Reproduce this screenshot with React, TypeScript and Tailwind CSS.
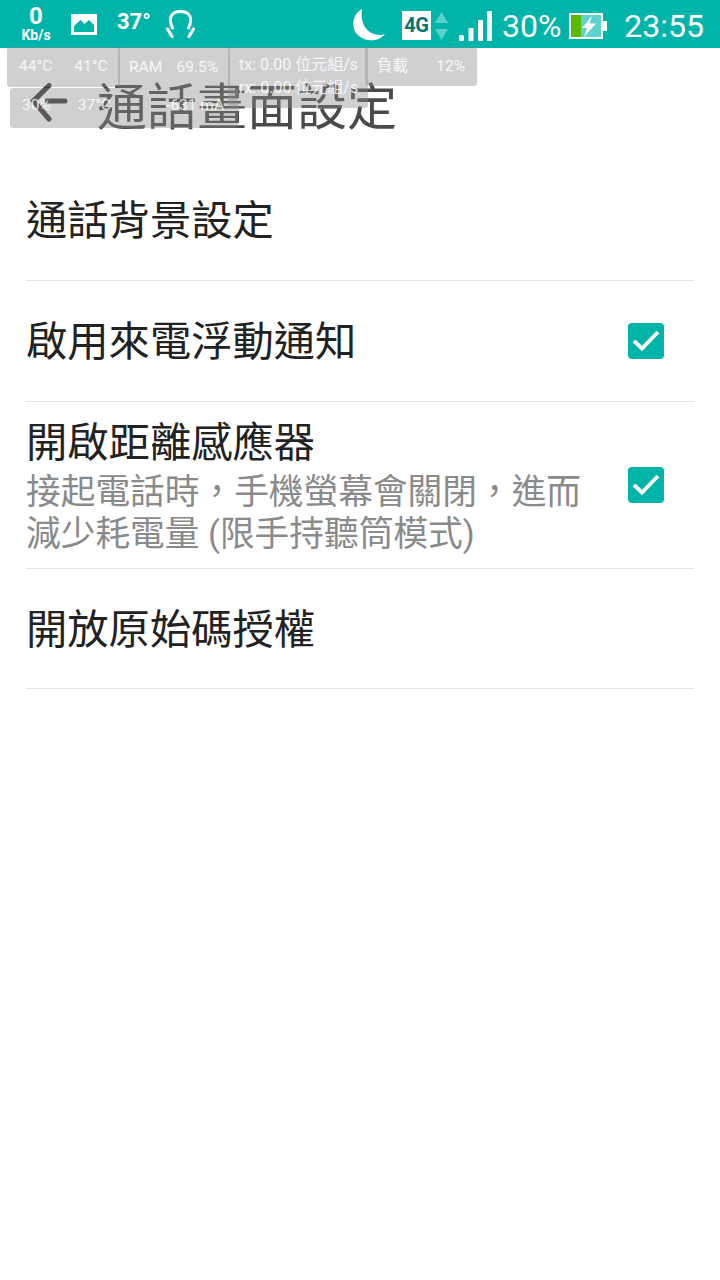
const cjk = "font-['Roboto','Noto_Sans_CJK_TC',sans-serif]";

function Check() {
  return (
    <div className="w-9 h-9 rounded-[4px] bg-[#00b4aa] flex items-center justify-center shrink-0">
      <svg width="36" height="36" viewBox="0 0 36 36" fill="none">
        <path d="M6 18 L14 25.500 L30 9" stroke="#fff" strokeWidth="3.800" />
      </svg>
    </div>
  );
}

function StatusBar() {
  return (
    <div className="h-12 bg-[#00b4aa] flex items-center text-white shrink-0 relative pt-[3px]">
      <div className="w-[71px] flex flex-col items-center pl-[1px] -mt-[3px] font-['Roboto',sans-serif] font-bold">
        <span className="text-[24px] leading-[20px]">0</span>
        <span className="text-[14px] leading-[14px] mt-[2px]">Kb/s</span>
      </div>
      <svg width="26" height="21" viewBox="0 0 26 21" className="-mt-[3px]">
        <path fillRule="evenodd" d="M0 0h26v21H0z M3 12 L9.500 6 L13.500 10 L18 6 L23 11 V18 H3Z" fill="#fff" />
      </svg>
      <span className="ml-[20px] -mt-[8px] text-[22px] font-bold font-['Roboto',sans-serif]">37°</span>
      <svg width="31" height="28" viewBox="0 0 31 28" fill="none" stroke="#fff" strokeLinecap="round" className="ml-[14px] -mt-[3px]">
        <path d="M7.500 18 C2.500 8 6.500 1.500 15.500 1.500 C24.500 1.500 28.500 8 23.500 18" strokeWidth="3" />
        <path d="M2.500 19 L7 26.500 M28.500 19 L24 26.500" strokeWidth="3.200" />
      </svg>
      <div className="flex-1" />
      <svg width="34" height="34" viewBox="0 0 34 34" className="mr-[17px] -mt-[1px]">
        <path d="M11 1 C2 6 0 17 5 25 C11 33 26 36 34 26 C22 30 8 21 11 1Z" fill="#fff" />
      </svg>
      <div className="w-[29px] h-[29px] bg-white text-[#0a7570] text-[20px] font-bold leading-[29px] text-center font-['Roboto',sans-serif] tracking-[-0.5px]">4G</div>
      <svg width="15" height="30" viewBox="0 0 15 30" className="ml-[3px]">
        <path d="M7.500 1 L14 12 H1Z M1 18 H14 L7.500 29Z" fill="#5cd0c8" />
      </svg>
      <svg width="33" height="30" viewBox="0 0 33 30" fill="#fff" className="ml-[10px]">
        <rect x="0" y="24" width="5" height="6" rx="1.500" />
        <rect x="9.500" y="17" width="5" height="13" rx="1" />
        <rect x="19" y="9" width="5" height="21" rx="1" />
        <rect x="28" y="0" width="5" height="30" rx="1" />
      </svg>
      <span className="ml-[10px] text-[32px] leading-none font-['Roboto',sans-serif]">30%</span>
      <svg width="39" height="26" viewBox="0 0 39 26" className="ml-[8px]">
        <rect x="1" y="1" width="32" height="24" fill="#5dd3cb" stroke="#fff" strokeWidth="2" />
        <rect x="2" y="2" width="10" height="22" fill="#5cb800" />
        <rect x="33" y="8" width="5" height="10" fill="#fff" />
        <path d="M23 3 L13 15 H18 L15 24 L27 10.500 H20.500Z" fill="#fff" />
      </svg>
      <span className="ml-[16px] mr-[16px] text-[32px] leading-none font-['Roboto',sans-serif]">23:55</span>
    </div>
  );
}

function Row({ title, sub, checked, h }: { title: string; sub?: string[]; checked?: boolean; h: string }) {
  return (
    <div className={`${h} border-b border-[#e4e4e4] flex items-center justify-between pr-[30px]`}>
      <div className={`flex flex-col ${sub ? "pt-[3px]" : "pt-[2px]"}`}>
        <span className="text-[41.300px] leading-[50px] text-[#222]">{title}</span>
        {sub && (
          <div className="flex flex-col mt-[3px]">
            {sub.map((s) => (
              <span key={s} className="text-[34.700px] leading-[42px] text-[#8a8a8a]">{s}</span>
            ))}
          </div>
        )}
      </div>
      {checked && <Check />}
    </div>
  );
}

export default function App() {
  return (
    <div className={`w-[720px] h-[1280px] bg-white flex flex-col relative overflow-hidden ${cjk}`}>
      <StatusBar />
      <div className="h-[112px] flex items-center shrink-0 pl-[30px]">
        <svg width="38" height="40" viewBox="0 0 38 40" fill="none" stroke="#3a3a3a" strokeWidth="5" strokeLinecap="round" className="-mt-[2px]">
          <path d="M35 18 H17 M19 2.500 L3.500 18 L19 36" />
        </svg>
        <span className="ml-[29px] mt-[7px] text-[50px] leading-none text-[#4a4a4a]">通話畫面設定</span>
      </div>
      <div className="mx-[26px] flex flex-col">
        <Row title="通話背景設定" h="h-[121px]" />
        <Row title="啟用來電浮動通知" checked h="h-[121px]" />
        <Row title="開啟距離感應器" checked h="h-[167px]" sub={["接起電話時，手機螢幕會關閉，進而", "減少耗電量 (限手持聽筒模式)"]} />
        <Row title="開放原始碼授權" h="h-[120px]" />
      </div>

      {/* floating system monitor overlay */}
      <div className="absolute left-[7px] top-[47px] w-[113px] h-[40px] bg-[#8a8a8a]/40 rounded-[3px] flex items-center pl-[12px] text-[15.500px] text-white/80">
        <span>44°C</span><span className="ml-[22px]">41°C</span>
      </div>
      <div className="absolute left-[118px] top-[47px] w-[112px] h-[41px] bg-[#8a8a8a]/40 rounded-[3px] flex items-center justify-between pl-[11px] pr-[12px] text-[15.500px] text-white/80">
        <span>RAM</span><span>69.5%</span>
      </div>
      <div className="absolute left-[228px] top-[47px] w-[140px] h-[61px] bg-[#8a8a8a]/40 rounded-[3px] pl-[11px] pt-[6px] text-[16px] leading-[23px] text-white/80 whitespace-nowrap">
        <div>tx: 0.00 位元組/s</div>
        <div>rx: 0.00 位元組/s</div>
      </div>
      <div className="absolute left-[365px] top-[47px] w-[112px] h-[39px] bg-[#8a8a8a]/40 rounded-[3px] flex items-center justify-between pl-[12px] pr-[12px] text-[15.500px] text-white/80">
        <span>負載</span><span>12%</span>
      </div>
      <div className="absolute left-[10px] top-[88px] w-[228px] h-[40px] bg-[#8a8a8a]/40 rounded-[3px] flex items-center pl-[12px] pb-[5px] text-[15.500px] text-white/80">
        <span>30%</span><span className="ml-[27px]">37°C</span><span className="ml-[55px]">-631 mA</span>
      </div>
    </div>
  );
}
